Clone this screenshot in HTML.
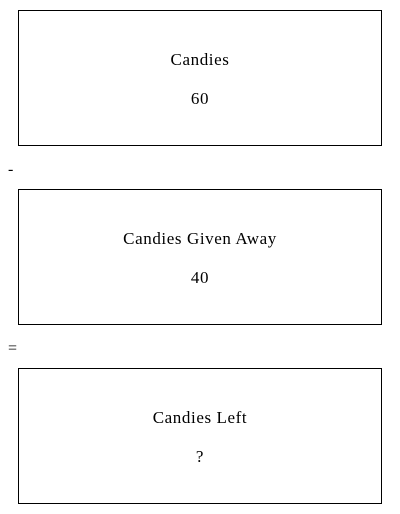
<!DOCTYPE html>
<html><head><style>
body{margin:0;width:400px;height:514px;background:#fff;font-family:"Liberation Serif",serif;color:#000;position:relative}
.box{position:absolute;left:18px;width:362px;height:134px;border:1px solid #000;text-align:center;font-size:17px;letter-spacing:0.6px}
.box .t{position:absolute;left:0;right:0;top:39px}
.box .v{position:absolute;left:0;right:0;top:78px}
.op{position:absolute;left:8px;font-size:16px}
</style></head><body>
<div class="box" style="top:10px"><div class="t">Candies</div><div class="v">60</div></div>
<div class="op" style="top:161px">-</div>
<div class="box" style="top:189px"><div class="t">Candies Given Away</div><div class="v">40</div></div>
<div class="op" style="top:340px">=</div>
<div class="box" style="top:368px"><div class="t">Candies Left</div><div class="v">?</div></div>
</body></html>
